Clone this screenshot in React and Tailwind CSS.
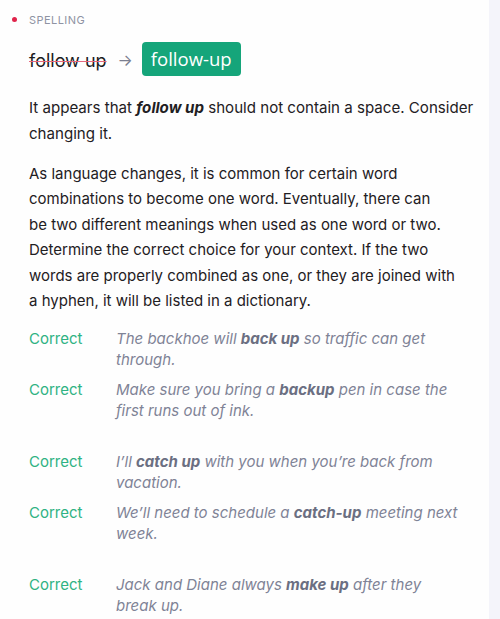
export default function App() {
  const B = ({ children }) => <b className="font-bold text-[#6b6f82]">{children}</b>;
  const groups = [
    [
      <>The backhoe will <B>back up</B> so traffic can get<br />through.</>,
      <>Make sure you bring a <B>backup</B> pen in case the<br />first runs out of ink.</>,
    ],
    [
      <>I’ll <B>catch up</B> with you when you’re back from<br />vacation.</>,
      <>We’ll need to schedule a <B>catch-up</B> meeting next<br />week.</>,
    ],
    [
      <>Jack and Diane always <B>make up</B> after they<br />break up.</>,
    ],
  ];
  return (
    <div className="flex w-[500px] h-[619px] overflow-hidden bg-[#f4f4fa] font-['Inter',sans-serif]">
      <div className="w-[489px] bg-[#fefefe] pl-[29px] pr-[14px] pt-[12px]">
        <div className="flex items-center h-[16px] relative">
          <span className="absolute left-[-17px] top-[5px] w-[5px] h-[5px] rounded-full bg-[#e0244b]"></span>
          <span className="text-[11px] tracking-[0.04em] text-[#8f93a3] uppercase">Spelling</span>
        </div>
        <div className="flex items-center mt-[14px] h-[34px]">
          <span className="text-[18px] leading-[24px] pt-[4px] text-[#1c1c1e] line-through decoration-[#e6687f] decoration-[1px]">follow up</span>
          <span className="ml-[11px] text-[#7b7f90] text-[16px] pt-[2px]">→</span>
          <span className="ml-[9px] h-[34px] px-[9px] rounded-[4px] bg-[#15a57a] text-white text-[18.5px] flex items-center font-['Open_Sans',sans-serif]">follow-up</span>
        </div>
        <p className="mt-[19px] text-[15.1px] leading-[25.5px] text-[#1f2023]">
          It appears that <b className="font-bold italic">follow up</b> should not contain a space. Consider changing it.
        </p>
        <p className="mt-[15px] text-[15px] leading-[25.4px] text-[#1f2023] whitespace-nowrap">
          As language changes, it is common for certain word<br />
          combinations to become one word. Eventually, there can<br />
          be two different meanings when used as one word or two.<br />
          Determine the correct choice for your context. If the two<br />
          words are properly combined as one, or they are joined with<br />
          a hyphen, it will be listed in a dictionary.
        </p>
        <div className="mt-[15px] flex flex-col gap-[30px]">
          {groups.map((g, gi) => (
            <div key={gi} className="flex flex-col gap-[9px]">
              {g.map((r, ri) => (
                <div key={ri} className="flex text-[15px] leading-[21px]">
                  <span className="w-[87px] shrink-0 text-[#2fb283]">Correct</span>
                  <span className="italic text-[#7f8396] whitespace-nowrap">{r}</span>
                </div>
              ))}
            </div>
          ))}
        </div>
      </div>
    </div>
  );
}
